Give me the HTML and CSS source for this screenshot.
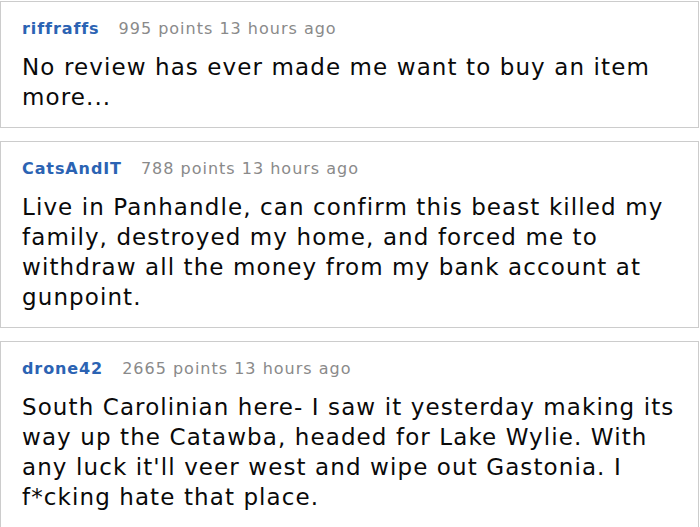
FILE: index.html
```html
<!DOCTYPE html>
<html>
<head>
<meta charset="utf-8">
<link rel="stylesheet" href="styles.css">
</head>
<body>
<div class="comments">
  <div class="comment">
    <div class="meta"><span class="user">riffraffs</span><span class="info">995 points 13 hours ago</span></div>
    <p class="text">No review has ever made me want to buy an item more...</p>
  </div>
  <div class="comment">
    <div class="meta"><span class="user">CatsAndIT</span><span class="info">788 points 13 hours ago</span></div>
    <p class="text">Live in Panhandle, can confirm this beast killed my family, destroyed my home, and forced me to withdraw all the money from my bank account at gunpoint.</p>
  </div>
  <div class="comment">
    <div class="meta"><span class="user">drone42</span><span class="info">2665 points 13 hours ago</span></div>
    <p class="text">South Carolinian here- I saw it yesterday making its way up the Catawba, headed for Lake Wylie. With any luck it'll veer west and wipe out Gastonia. I f*cking hate that place.</p>
  </div>
</div>
</body>
</html>
```
FILE: styles.css
```css
html, body {
  margin: 0;
  padding: 0;
  background: #fff;
}
body {
  font-family: "DejaVu Sans", sans-serif;
  padding-top: 1px;
  overflow: hidden;
}
.comments {
  display: flex;
  flex-direction: column;
  gap: 13px;
  width: 699px;
}
.comment {
  border: 1px solid #cccccc;
  padding: 17px 12px 15px 21px;
}
.meta {
  display: flex;
  align-items: baseline;
  gap: 19px;
  line-height: 20px;
  font-size: 16px;
}
.user {
  color: #2b63b3;
  font-weight: bold;
  letter-spacing: 0.9px;
}
.info {
  color: #8a8a8a;
  letter-spacing: 1px;
}
.text {
  margin: 13px 0 0;
  font-size: 23px;
  letter-spacing: 1.1px;
  line-height: 30px;
  color: #0a0a0a;
}
```
